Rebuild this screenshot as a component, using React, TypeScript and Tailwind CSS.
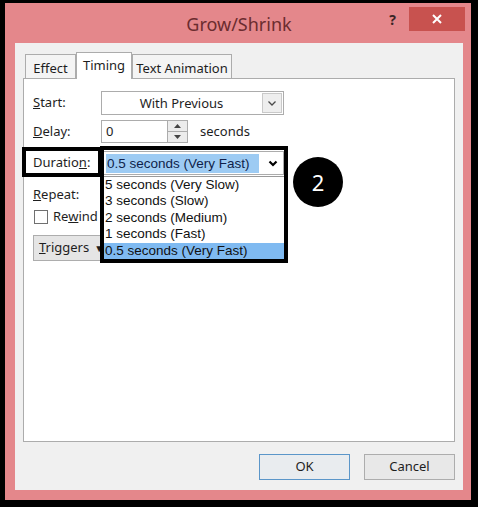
import type { ReactNode } from "react";

const ui = "font-['Noto_Sans',sans-serif]";
const classic = "font-['Liberation_Sans',sans-serif]";

const durations = [
  "5 seconds (Very Slow)",
  "3 seconds (Slow)",
  "2 seconds (Medium)",
  "1 seconds (Fast)",
  "0.5 seconds (Very Fast)",
];

function Chevron({ bold }: { bold?: boolean }) {
  return (
    <svg width="10" height="7" viewBox="0 0 10 7">
      <path
        d="M1.5 1.5L5 5l3.5-3.5"
        fill="none"
        stroke={bold ? "#000" : "#4a4a4a"}
        strokeWidth={bold ? 2.2 : 1.3}
      />
    </svg>
  );
}

function Label({ children }: { children: ReactNode }) {
  return <span className="w-[68px] shrink-0 text-[13px] text-[#1e1e1e]">{children}</span>;
}

function Tab({ label, active, width }: { label: string; active?: boolean; width: string }) {
  return (
    <div
      className={
        active
          ? `relative z-10 -mb-px h-[27px] ${width} border border-b-0 border-[#acacac] bg-white pt-[2px] text-center text-[13px] leading-[20px] text-[#1e1e1e]`
          : `h-[24px] ${width} border border-b-0 border-[#acacac] bg-[#f4f4f4] pt-[3px] text-center text-[13px] leading-[20px] text-[#1e1e1e]`
      }
    >
      {label}
    </div>
  );
}

function DialogButton({ label, primary }: { label: string; primary?: boolean }) {
  return (
    <div
      className={`flex h-[26px] w-[91px] items-center justify-center border text-[13px] text-[#1e1e1e] ${
        primary ? "border-[#5b96c9] bg-[#e9ecef]" : "border-[#adadad] bg-[#e8e8e8]"
      }`}
    >
      {label}
    </div>
  );
}

export default function App() {
  return (
    <div className={`relative h-[507px] w-[478px] bg-black pb-[7px] pl-[5px] pr-[7px] pt-[3px] ${ui}`}>
      <div className="flex h-full flex-col bg-[#e4878b] pb-[10px] pl-[10px] pr-[8px]">
        {/* title bar */}
        <div className="relative h-[40px] shrink-0">
          <div className="pt-[8px] text-center text-[18px] leading-[26px] text-[#6b2c2f]">Grow/Shrink</div>
          <span className="absolute right-[67px] top-[6px] text-[14px] font-bold text-[#3b2526]">?</span>
          <div className="absolute right-[-2px] top-[4px] flex h-[24px] w-[56px] items-center justify-center bg-[#c8524f]">
            <svg width="10" height="10" viewBox="0 0 10 10">
              <path d="M1 1l8 8M9 1l-8 8" stroke="#fff" strokeWidth="2" />
            </svg>
          </div>
        </div>

        <div className="flex flex-1 flex-col bg-[#f0f0f0] px-[8px] pb-[10px] pt-[9px]">
          {/* tabs */}
          <div className="flex h-[26px] shrink-0 items-end pl-[2px]">
            <Tab label="Effect" width="w-[51px]" />
            <Tab label="Timing" width="w-[56px]" active />
            <Tab label="Text Animation" width="w-[100px]" />
          </div>

          <div className="flex flex-1 flex-col border border-[#acacac] bg-white pl-[9px] pt-[12px]">
            <div className="flex h-[24px] items-center">
              <Label>
                <u>S</u>tart:
              </Label>
              <div className="flex h-[24px] w-[183px] border border-[#acacac] bg-white">
                <span className="flex-1 text-center text-[13px] leading-[22px] text-[#1e1e1e]">With Previous</span>
                <span className="m-[1px] flex w-[20px] items-center justify-center border border-[#c9c9c9] bg-[#eeeeee]">
                  <Chevron />
                </span>
              </div>
            </div>

            <div className="mt-[5px] flex h-[23px] items-center">
              <Label>
                <u>D</u>elay:
              </Label>
              <div className="h-[23px] w-[67px] border border-[#acacac] pl-[4px] text-[13px] leading-[21px] text-[#1e1e1e]">0</div>
              <div className="flex h-[23px] w-[20px] flex-col border border-l-0 border-[#acacac] bg-[#ececec]">
                <span className="flex flex-1 items-center justify-center border-b border-[#acacac]">
                  <svg width="7" height="4" viewBox="0 0 7 4">
                    <path d="M0 4L3.5 0L7 4z" fill="#444" />
                  </svg>
                </span>
                <span className="flex flex-1 items-center justify-center">
                  <svg width="7" height="4" viewBox="0 0 7 4">
                    <path d="M0 0L3.5 4L7 0z" fill="#444" />
                  </svg>
                </span>
              </div>
              <span className="ml-[12px] text-[13px] text-[#1e1e1e]">seconds</span>
            </div>

            <div className="mt-[8px] flex h-[24px] items-center">
              <Label>
                Duratio<u>n</u>:
              </Label>
              <div className="flex h-[24px] w-[183px] items-center border border-[#acacac] bg-white">
                <span className={`ml-[4px] flex-1 bg-[#9dcbf3] pl-[1px] text-[13.5px] leading-[19px] text-[#0f1f4a] ${classic}`}>
                  0.5 seconds (Very Fast)
                </span>
                <span className="ml-[4px] flex h-[22px] w-[20px] items-center justify-center bg-white">
                  <Chevron bold />
                </span>
              </div>
            </div>

            <div className="mt-[8px] flex h-[24px] items-center">
              <Label>
                <u>R</u>epeat:
              </Label>
            </div>

            <div className="mt-[3px] flex h-[14px] items-center pl-[1px]">
              <span className="h-[14px] w-[14px] border border-[#707070] bg-white" />
              <span className="ml-[5px] text-[13px] text-[#1e1e1e]">
                Re<u>w</u>ind
              </span>
            </div>

            <div className="mt-[11px] flex h-[26px] w-[76px] items-center border border-[#adadad] bg-[#e5e5e5] pl-[5px] text-[13px] text-[#1e1e1e]">
              <span>
                <u>T</u>riggers
              </span>
              <span className="ml-[5px] text-[10px]">▼</span>
            </div>
          </div>

          <div className="mt-[12px] flex shrink-0 justify-end gap-[14px]">
            <DialogButton label="OK" primary />
            <DialogButton label="Cancel" />
          </div>
        </div>
      </div>

      {/* callout around the duration field and its open list */}
      <div className="absolute left-[22px] top-[147px] h-[30px] w-[80px] border-4 border-black" />
      <div className="absolute left-[100px] top-[146px] flex h-[117px] w-[188px] flex-col border-4 border-black">
        <div className="h-[26px] shrink-0" />
        <div className={`flex-1 border-t border-[#9a9a9a] bg-white ${classic}`}>
          {durations.map((d, i) => (
            <div
              key={d}
              className={`h-[16.4px] pl-[1px] text-[13.5px] leading-[16.4px] text-[#111] ${
                i === durations.length - 1 ? "bg-[#7fbaf1]" : ""
              }`}
            >
              {d}
            </div>
          ))}
        </div>
      </div>
      <div className="absolute left-[293px] top-[157px] flex h-[50px] w-[50px] items-center justify-center rounded-full bg-black text-[22px] text-white">
        2
      </div>
    </div>
  );
}
